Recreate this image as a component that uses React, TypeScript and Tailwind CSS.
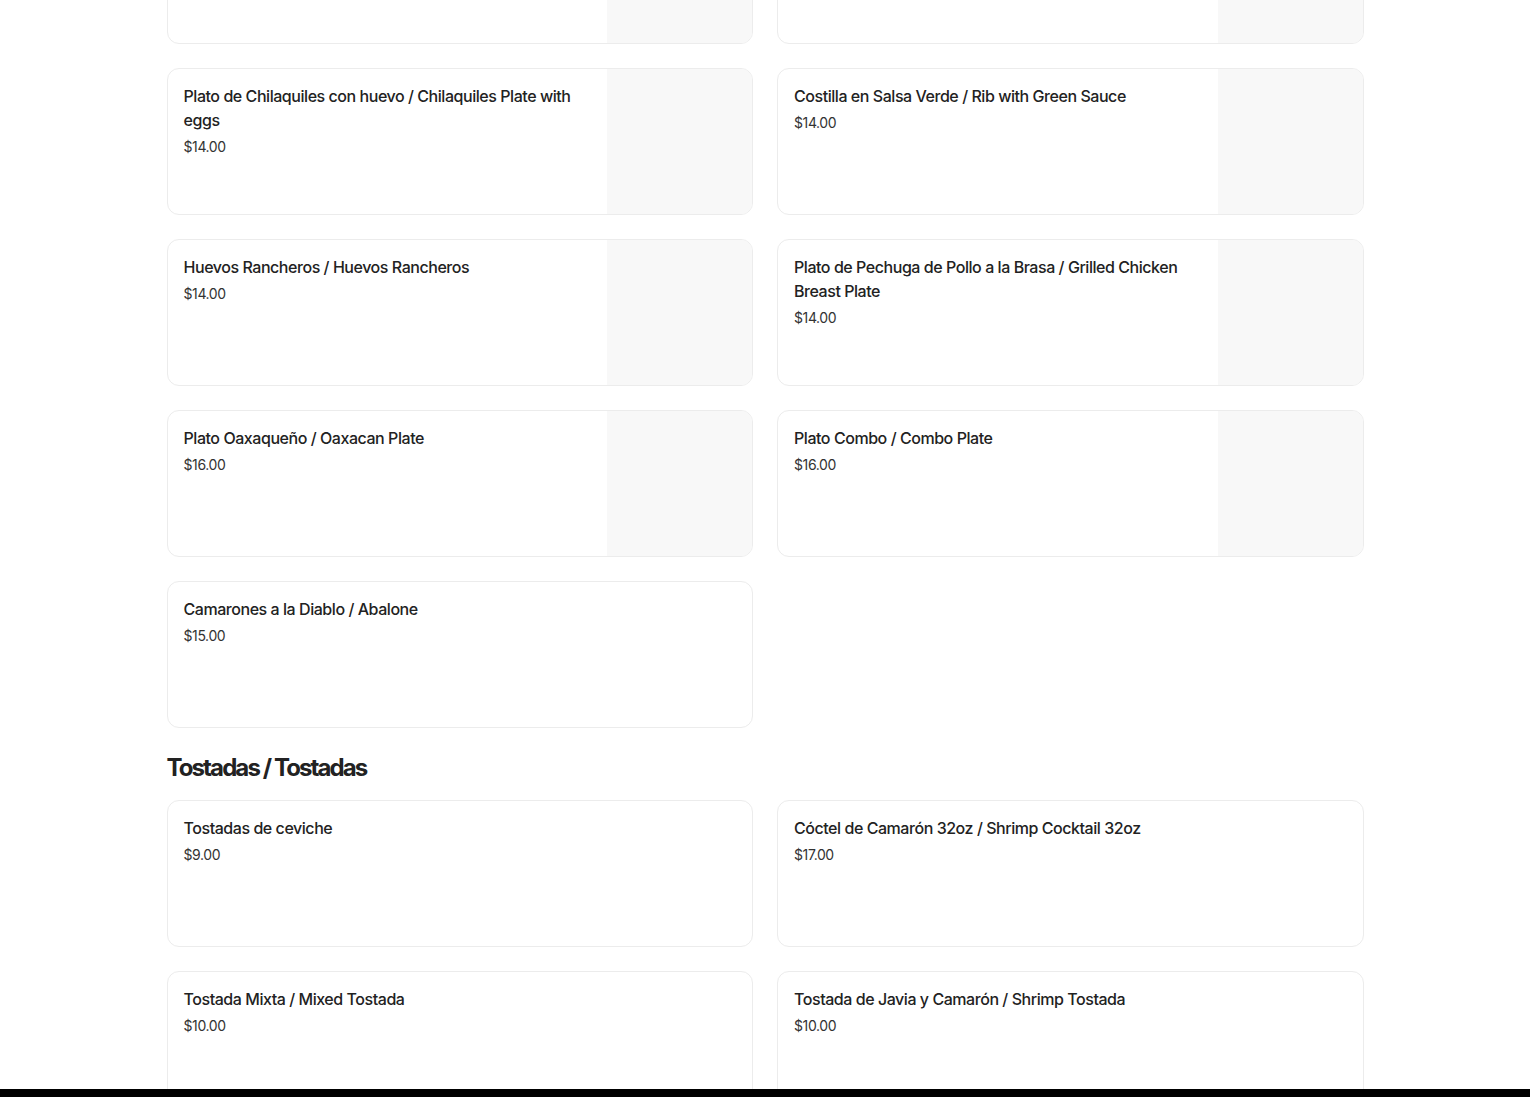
type Item = {
  name: string;
  price: string;
  image?: boolean;
};

const mainItems: Item[] = [
  { name: '', price: '', image: true },
  { name: '', price: '', image: true },
  { name: 'Plato de Chilaquiles con huevo / Chilaquiles Plate with eggs', price: '$14.00', image: true },
  { name: 'Costilla en Salsa Verde / Rib with Green Sauce', price: '$14.00', image: true },
  { name: 'Huevos Rancheros / Huevos Rancheros', price: '$14.00', image: true },
  { name: 'Plato de Pechuga de Pollo a la Brasa / Grilled Chicken Breast Plate', price: '$14.00', image: true },
  { name: 'Plato Oaxaqueño / Oaxacan Plate', price: '$16.00', image: true },
  { name: 'Plato Combo / Combo Plate', price: '$16.00', image: true },
  { name: 'Camarones a la Diablo / Abalone', price: '$15.00' },
];

const tostadas: Item[] = [
  { name: 'Tostadas de ceviche', price: '$9.00' },
  { name: 'Cóctel de Camarón 32oz / Shrimp Cocktail 32oz', price: '$17.00' },
  { name: 'Tostada Mixta / Mixed Tostada', price: '$10.00' },
  { name: 'Tostada de Javia y Camarón / Shrimp Tostada', price: '$10.00' },
];

function MenuCard({ item }: { item: Item }) {
  return (
    <div className="flex h-[147px] overflow-hidden rounded-xl border border-[#ececec] bg-white">
      <div className="flex-1 px-4 pt-[15px]">
        {item.name && (
          <>
            <div className="text-[16px] font-medium leading-6 tracking-[-0.45px] text-[#222]">{item.name}</div>
            <div className="mt-[5px] text-[14px] leading-5 tracking-[-0.4px] text-[#333]">{item.price}</div>
          </>
        )}
      </div>
      {item.image && <div className="w-[145px] shrink-0 bg-[#f8f8f8]" />}
    </div>
  );
}

export default function App() {
  return (
    <div className="min-h-screen bg-white font-['Inter',sans-serif]">
      <div className="mx-auto -mt-[103px] w-[1197px] pb-10">
        <div className="grid grid-cols-2 gap-6">
          {mainItems.map((item, i) => (
            <MenuCard key={i} item={item} />
          ))}
        </div>

        <h2 className="mt-[24px] mb-[16px] text-[24px] font-bold leading-8 tracking-[-1.9px] text-[#222]">
          Tostadas / Tostadas
        </h2>

        <div className="grid grid-cols-2 gap-6">
          {tostadas.map((item, i) => (
            <MenuCard key={i} item={item} />
          ))}
        </div>
      </div>

      <div className="fixed bottom-0 left-0 right-0 h-2 bg-black" />
    </div>
  );
}
